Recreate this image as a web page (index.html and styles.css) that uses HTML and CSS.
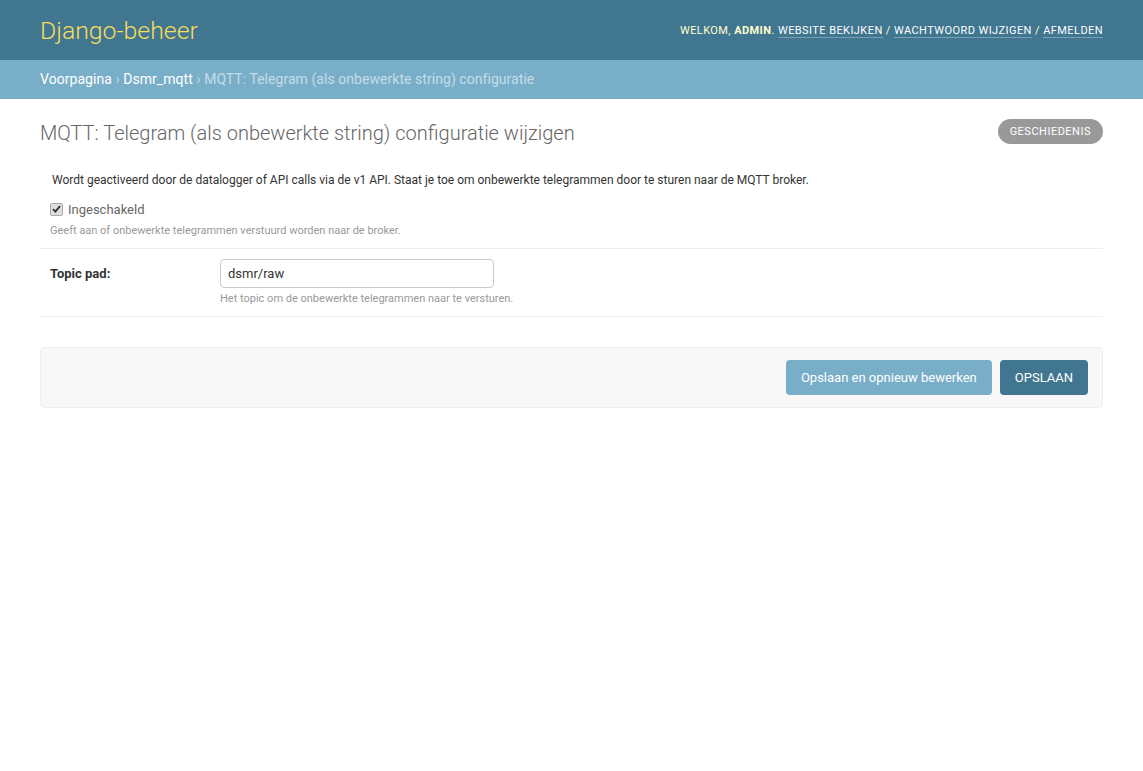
FILE: index.html
```html
<!DOCTYPE html>
<html lang="nl">
<head>
<meta charset="utf-8">
<title>MQTT: Telegram configuratie wijzigen | Django-beheer</title>
<link rel="stylesheet" href="styles.css">
</head>
<body>
<div class="header">
  <div class="branding">Django-beheer</div>
  <div class="user-tools">
    Welkom, <strong>admin</strong>. <a href="#">Website bekijken</a> / <a href="#">Wachtwoord wijzigen</a> / <a href="#">Afmelden</a>
  </div>
</div>
<div class="breadcrumbs">
  <a href="#">Voorpagina</a> › <a href="#">Dsmr_mqtt</a> › MQTT: Telegram (als onbewerkte string) configuratie
</div>
<div class="content">
  <div class="title-row">
    <h1 class="title">MQTT: Telegram (als onbewerkte string) configuratie wijzigen</h1>
    <a class="history" href="#">Geschiedenis</a>
  </div>
  <form class="form">
    <div class="fieldset">
      <div class="description">Wordt geactiveerd door de datalogger of API calls via de v1 API. Staat je toe om onbewerkte telegrammen door te sturen naar de MQTT broker.</div>
      <div class="form-row">
        <div class="check-line">
          <span class="check" role="checkbox" aria-checked="true">
            <svg width="9" height="8" viewBox="0 0 9 8"><path d="M1 4.2 L3.4 6.6 L8 1.2" fill="none" stroke="#333" stroke-width="1.8"/></svg>
          </span>
          <label class="check-label">Ingeschakeld</label>
        </div>
        <p class="help">Geeft aan of onbewerkte telegrammen verstuurd worden naar de broker.</p>
      </div>
      <div class="form-row aligned">
        <label class="field-label">Topic pad:</label>
        <div class="field">
          <input type="text" class="text-input" value="dsmr/raw">
          <p class="help help-field">Het topic om de onbewerkte telegrammen naar te versturen.</p>
        </div>
      </div>
    </div>
    <div class="submit-row">
      <button type="button" class="btn btn-secondary">Opslaan en opnieuw bewerken</button>
      <button type="button" class="btn btn-default">OPSLAAN</button>
    </div>
  </form>
</div>
</body>
</html>
```
FILE: styles.css
```css
html, body {
  margin: 0;
  padding: 0;
}
body {
  font-family: Roboto, "Liberation Sans", sans-serif;
  font-size: 14px;
  color: #333;
  background: #fff;
}
a {
  text-decoration: none;
}
.header {
  height: 60px;
  box-sizing: border-box;
  padding: 0 40px;
  background: #417690;
  display: flex;
  align-items: center;
  justify-content: space-between;
}
.branding {
  font-size: 24.8px;
  font-weight: 300;
  color: #f5dd5d;
  margin-top: 1px;
}
.user-tools {
  font-size: 11px;
  letter-spacing: 0.43px;
  text-transform: uppercase;
  color: #ffc;
  line-height: 14px;
  margin-top: 1px;
}
.user-tools strong {
  font-weight: 700;
}
.user-tools a {
  color: #fff;
  border-bottom: 1px solid rgba(255, 255, 255, 0.3);
}
.breadcrumbs {
  background: #79aec8;
  padding: 10px 40px;
  color: #c4dce8;
  font-size: 14px;
  line-height: 19px;
  letter-spacing: 0.05px;
}
.breadcrumbs a {
  color: #fff;
}
.content {
  padding: 20px 40px;
}
.title-row {
  display: flex;
  align-items: flex-start;
  justify-content: space-between;
  height: 28px;
}
.title {
  margin: 0;
  font-size: 20px;
  font-weight: 300;
  color: #666;
  line-height: 28px;
}
.history {
  display: block;
  background: #999;
  color: #fff;
  font-size: 11px;
  letter-spacing: 0.5px;
  text-transform: uppercase;
  padding: 0 12px;
  line-height: 25px;
  height: 25px;
  border-radius: 15px;
}
.form {
  margin: 0;
}
.fieldset {
  margin-top: 23px;
}
.description {
  font-size: 12px;
  line-height: 20px;
  padding-left: 12px;
  color: #333;
}
.form-row {
  padding: 10px;
  font-size: 13px;
  border-bottom: 1px solid #eee;
}
.check-line {
  display: flex;
  align-items: center;
  height: 18px;
}
.check {
  box-sizing: border-box;
  width: 13px;
  height: 13px;
  margin: 0 5px 0 0;
  border: 1px solid #a9a9a9;
  border-radius: 2px;
  background: #dedede;
  display: flex;
  align-items: center;
  justify-content: center;
}
.check svg {
  display: block;
}
.check-label {
  color: #666;
  font-size: 13px;
}
.help {
  margin: 6px 0 0;
  font-size: 11px;
  line-height: 14px;
  color: #999;
}
.help-field {
  margin-top: 4px;
}
.aligned {
  display: flex;
  align-items: flex-start;
}
.field-label {
  width: 160px;
  padding-right: 10px;
  font-weight: 700;
  color: #333;
  line-height: 29px;
  flex: none;
}
.text-input {
  display: block;
  box-sizing: border-box;
  width: 274px;
  height: 29px;
  padding: 5px 7px;
  border: 1px solid #ccc;
  border-radius: 4px;
  font-family: Roboto, "Liberation Sans", sans-serif;
  font-size: 13px;
  color: #333;
  margin: 0;
}
.submit-row {
  margin-top: 30px;
  padding: 12px 14px;
  background: #f8f8f8;
  border: 1px solid #eee;
  border-radius: 4px;
  display: flex;
  justify-content: flex-end;
  gap: 8px;
}
.btn {
  height: 35px;
  border: none;
  border-radius: 4px;
  padding: 0 15px;
  font-family: Roboto, "Liberation Sans", sans-serif;
  font-size: 13px;
  color: #fff;
}
.btn-secondary {
  background: #79aec8;
}
.btn-default {
  background: #417690;
}
```
